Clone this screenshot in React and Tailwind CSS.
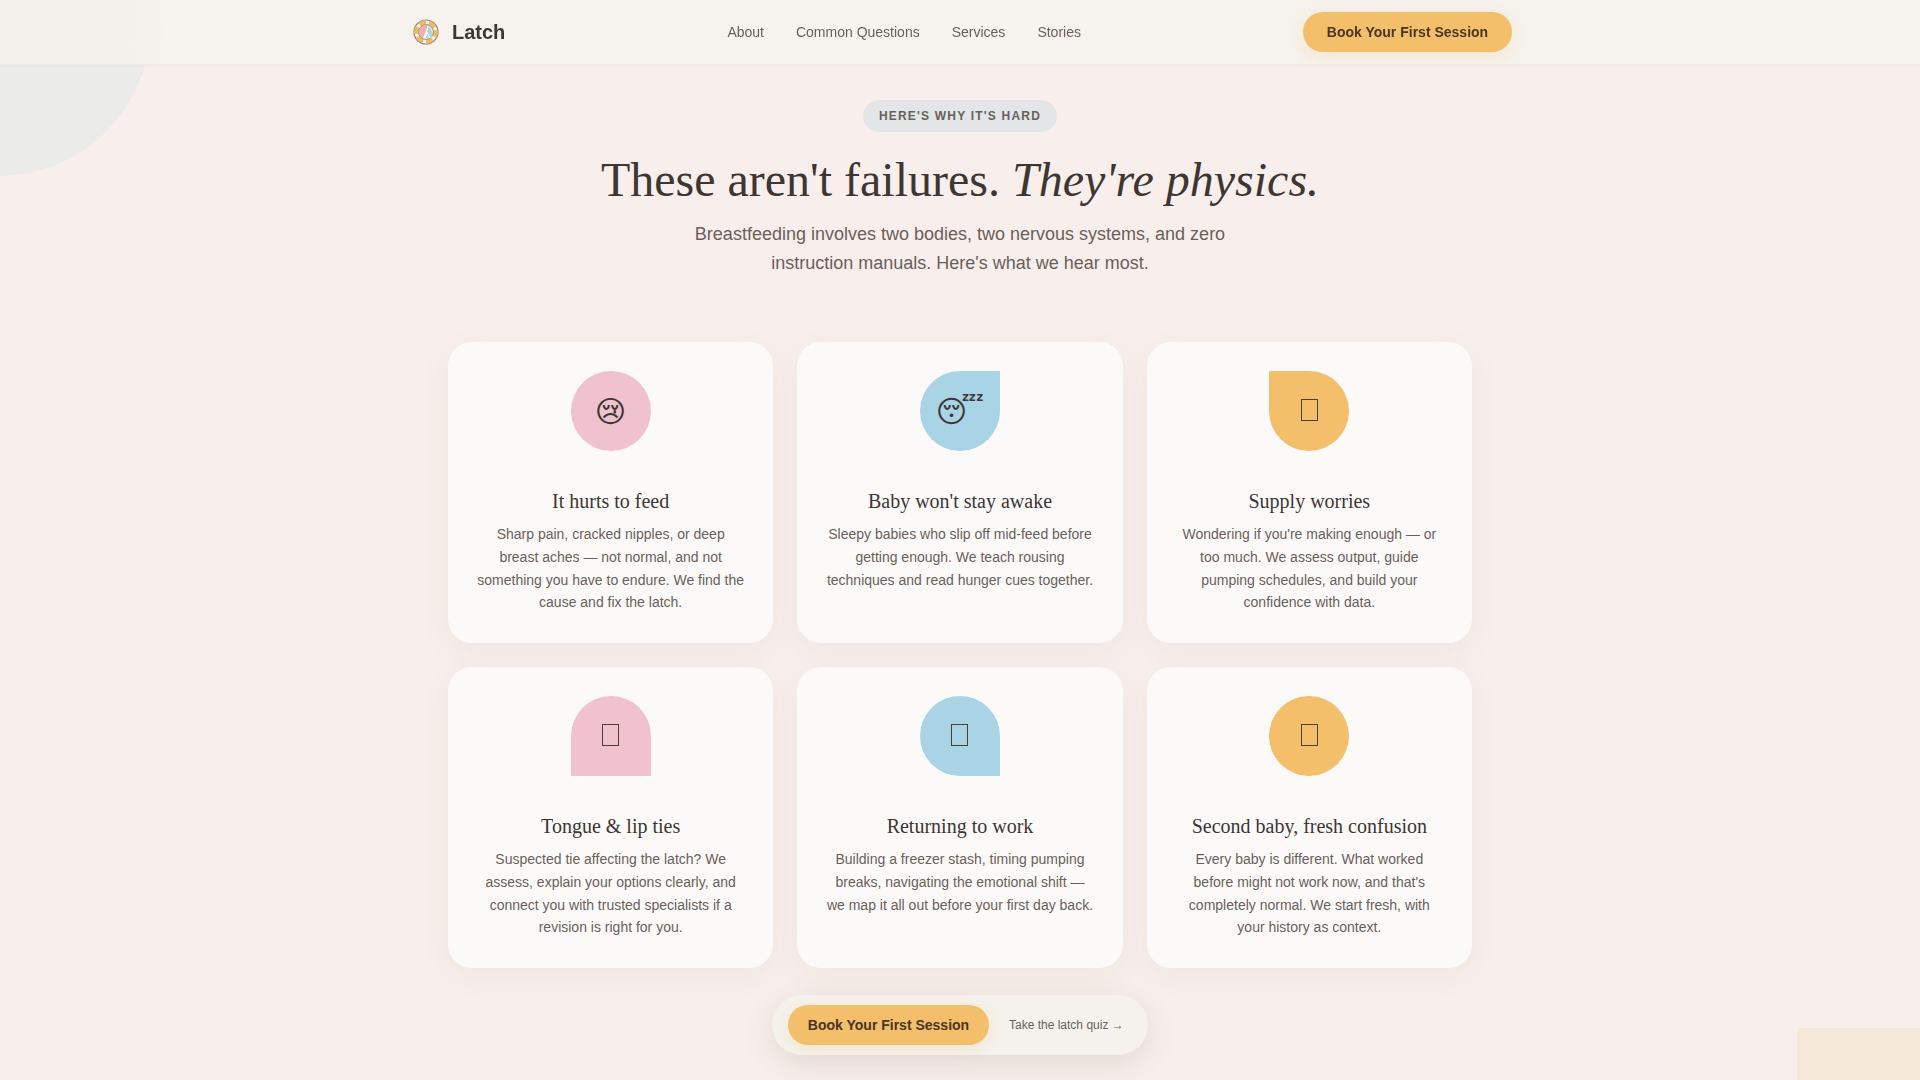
const sans = '"Liberation Sans", Arial, sans-serif';

const cards = [
  {
    icon: '😢',
    shape: 'bg-[#f0c2ce] rounded-full',
    title: 'It hurts to feed',
    text: 'Sharp pain, cracked nipples, or deep breast aches — not normal, and not something you have to endure. We find the cause and fix the latch.',
  },
  {
    icon: '😴',
    shape: 'bg-[#a8d4e6] rounded-full rounded-tr-none',
    title: "Baby won't stay awake",
    text: 'Sleepy babies who slip off mid-feed before getting enough. We teach rousing techniques and read hunger cues together.',
  },
  {
    shape: 'bg-[#f4bf6b] rounded-full rounded-tl-none',
    title: 'Supply worries',
    text: "Wondering if you're making enough — or too much. We assess output, guide pumping schedules, and build your confidence with data.",
  },
  {
    shape: 'bg-[#f0c2ce] rounded-t-full',
    title: 'Tongue & lip ties',
    text: 'Suspected tie affecting the latch? We assess, explain your options clearly, and connect you with trusted specialists if a revision is right for you.',
  },
  {
    shape: 'bg-[#a8d4e6] rounded-full rounded-br-none',
    title: 'Returning to work',
    text: 'Building a freezer stash, timing pumping breaks, navigating the emotional shift — we map it all out before your first day back.',
  },
  {
    shape: 'bg-[#f4bf6b] rounded-full',
    title: 'Second baby, fresh confusion',
    text: "Every baby is different. What worked before might not work now, and that's completely normal. We start fresh, with your history as context.",
  },
];

function LatchLogo() {
  return (
    <svg width="26" height="26" viewBox="0 0 26 26">
      <circle cx="13" cy="13" r="12" fill="#f5f2ed" stroke="#8a8880" strokeWidth="1.2" />
      <circle cx="13" cy="13" r="9.6" fill="none" stroke="#eeb95f" strokeWidth="4.6" strokeDasharray="7 3" strokeDashoffset="2" />
      <circle cx="13" cy="13" r="7.4" fill="#f5f2ed" stroke="#85827a" strokeWidth="0.9" />
      <path d="M6 11c2-4 6-6 9-5l-3 8-2 5c-3-1-5-5-4-8z" fill="#eeb0a6" />
      <path d="M15 7c3 2 5 6 4 11l-6 1 1-5z" fill="#aed2e2" />
      <path d="M15 7l-3 12M14 13l3 6" stroke="#ffffff" strokeWidth="1" fill="none" />
    </svg>
  );
}

function PrimaryButton({ className = '' }) {
  return (
    <a className={`flex h-10 items-center justify-center rounded-full bg-[#f4bf6b] text-[14px] font-bold text-[#4a3520] shadow-[0_4px_16px_rgba(244,191,107,0.25)] ${className}`}>
      Book Your First Session
    </a>
  );
}

function Card({ icon, shape, title, text }) {
  return (
    <div className="flex h-[301px] flex-col items-center rounded-3xl bg-[#fcf9f9] px-[28px] pt-[29px] text-center shadow-[0_8px_32px_rgba(74,53,32,0.05)]">
      <div className={`flex h-20 w-20 items-center justify-center font-['DejaVu_Sans',sans-serif] text-[30px] text-[#3d3632] ${shape}`}>
        {icon ?? <span className="mb-[2px] h-[22px] w-[17px] border border-[#4a3f30]" />}
      </div>
      <h3 className="mt-[37px] font-['Liberation_Serif',serif] text-[20px] leading-[26px] font-normal text-[#3d3632]">{title}</h3>
      <p className="mt-[9px] text-[14px] leading-[22.8px] text-[#6b5f5a]">{text}</p>
    </div>
  );
}

export default function App() {
  return (
    <div className="relative h-[1080px] overflow-hidden bg-[#f8efec]" style={{ fontFamily: sans }}>
      {/* Formas decorativas */}
      <div className="absolute top-[-124px] left-[-150px] h-[300px] w-[300px] rounded-full bg-[#ebebe9]" />
      <div className="absolute right-0 bottom-0 h-[52px] w-[123px] bg-[#f5e8d9]" />

      <nav className="relative z-10 h-[65px] border-b border-[#f0ebe6] bg-[#f5f2ed]/90 shadow-[0_1px_3px_rgba(74,53,32,0.04)] backdrop-blur-md">
        <div className="mx-auto flex h-16 max-w-[1104px] items-center justify-between">
          <div className="flex items-center gap-2">
            <div className="flex h-9 w-9 items-center justify-center">
              <LatchLogo />
            </div>
            <span className="text-[20px] font-bold text-[#3d3632]">Latch</span>
          </div>
          <div className="flex items-center gap-8 text-[14px] text-[#6b5f5a]">
            <a>About</a>
            <a>Common Questions</a>
            <a>Services</a>
            <a>Stories</a>
          </div>
          <PrimaryButton className="w-[209px]" />
        </div>
      </nav>

      <main className="relative mx-auto flex max-w-[1024px] flex-col items-center">
        <span className="mt-[35px] flex h-8 items-center rounded-full bg-[#e2e6e6] px-4 text-[12px] font-bold tracking-[0.1em] text-[#6b5f5a] uppercase">
          Here's why it's hard
        </span>
        <h1 className="mt-[19px] font-['Liberation_Serif',serif] text-[48px] leading-[58px] font-normal text-[#3d3632]">
          These aren't failures. <em>They're physics.</em>
        </h1>
        <p className="mt-[11px] max-w-[560px] text-center text-[18px] leading-[29px] text-[#6b5f5a]">
          Breastfeeding involves two bodies, two nervous systems, and zero instruction manuals. Here's what we hear most.
        </p>
        <div className="mt-[64px] grid w-full grid-cols-3 gap-6">
          {cards.map((card) => (
            <Card key={card.title} {...card} />
          ))}
        </div>
      </main>

      {/* CTA flotante */}
      <div className="absolute bottom-[25px] left-1/2 flex h-[60px] w-[376px] -translate-x-1/2 items-center gap-5 rounded-full bg-[#f5f2ed] pl-4 shadow-[0_8px_32px_rgba(74,53,32,0.12)]">
        <PrimaryButton className="w-[201px]" />
        <a className="text-[12px] text-[#6b5f5a]">Take the latch quiz →</a>
      </div>
    </div>
  );
}
